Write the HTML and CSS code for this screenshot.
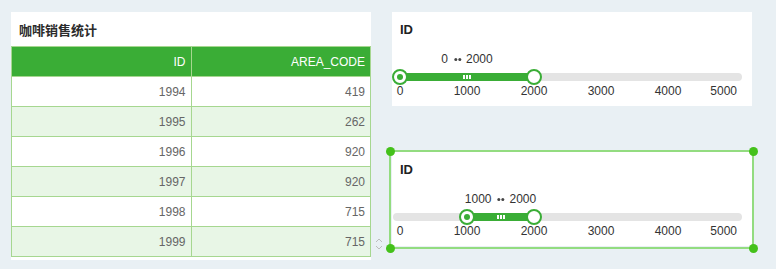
FILE: index.html
```html
<!DOCTYPE html>
<html lang="zh">
<head>
<meta charset="utf-8">
<title>咖啡销售统计</title>
<link rel="stylesheet" href="styles.css">
</head>
<body>
<div class="page">
  <section class="card table-card">
    <h2 class="card-title">咖啡销售统计</h2>
    <table class="grid">
      <thead>
        <tr><th>ID</th><th>AREA_CODE</th></tr>
      </thead>
      <tbody>
        <tr><td>1994</td><td>419</td></tr>
        <tr class="alt"><td>1995</td><td>262</td></tr>
        <tr><td>1996</td><td>920</td></tr>
        <tr class="alt"><td>1997</td><td>920</td></tr>
        <tr><td>1998</td><td>715</td></tr>
        <tr class="alt"><td>1999</td><td>715</td></tr>
      </tbody>
    </table>
    <svg class="scroll-arrows" width="8" height="14" viewBox="0 0 8 14">
      <path d="M1 5 L4 2 L7 5" fill="none" stroke="#bdbdbd" stroke-width="1"/>
      <path d="M1 9 L4 12 L7 9" fill="none" stroke="#bdbdbd" stroke-width="1"/>
    </svg>
  </section>

  <div class="side">
    <section class="card slider-card">
      <h3 class="slider-title">ID</h3>
      <div class="slider">
        <div class="label-row"><span class="range-label" style="left:20%">0<span class="dots"><i></i><i></i></span>2000</span></div>
        <div class="track">
          <div class="rail">
            <div class="fill" style="left:0%;width:40%"><span class="grip"><i></i><i></i><i></i></span></div>
            <span class="handle min" style="left:0%"></span>
            <span class="handle" style="left:40%"></span>
          </div>
        </div>
        <div class="ticks">
          <span style="left:0%">0</span>
          <span style="left:20%">1000</span>
          <span style="left:40%">2000</span>
          <span style="left:60%">3000</span>
          <span style="left:80%">4000</span>
          <span class="end" style="left:100%">5000</span>
        </div>
      </div>
    </section>

    <section class="card slider-card selected">
      <h3 class="slider-title">ID</h3>
      <div class="slider">
        <div class="label-row"><span class="range-label" style="left:30%">1000<span class="dots"><i></i><i></i></span>2000</span></div>
        <div class="track">
          <div class="rail">
            <div class="fill" style="left:20%;width:20%"><span class="grip"><i></i><i></i><i></i></span></div>
            <span class="handle min" style="left:20%"></span>
            <span class="handle" style="left:40%"></span>
          </div>
        </div>
        <div class="ticks">
          <span style="left:0%">0</span>
          <span style="left:20%">1000</span>
          <span style="left:40%">2000</span>
          <span style="left:60%">3000</span>
          <span style="left:80%">4000</span>
          <span class="end" style="left:100%">5000</span>
        </div>
      </div>
      <div class="selection">
        <span class="dot tl"></span><span class="dot tr"></span>
        <span class="dot bl"></span><span class="dot br"></span>
      </div>
    </section>
  </div>
</div>
</body>
</html>
```

FILE: styles.css
```css
* { box-sizing: border-box; }

html, body {
  margin: 0;
  padding: 0;
  background: #e9f0f4;
  font-family: "Liberation Sans", Arial, "Noto Sans CJK SC", sans-serif;
  color: #333;
}

.page {
  display: flex;
  align-items: flex-start;
  gap: 21px;
  padding: 12px 0 0 11px;
}

.card {
  background: #fff;
  width: 360px;
  position: relative;
}

/* ---------- table card ---------- */
.table-card {
  padding-bottom: 3px;
}

.card-title {
  margin: 0;
  height: 34px;
  padding-left: 8px;
  font-size: 13px;
  line-height: 35px;
  font-weight: bold;
  color: #2b2b2b;
  font-family: "Noto Sans CJK SC", "Liberation Sans", sans-serif;
}

.grid {
  width: 100%;
  border-collapse: collapse;
  font-size: 12px;
  table-layout: fixed;
}

.grid th,
.grid td {
  height: 30px;
  padding: 0 5px 0 0;
  text-align: right;
  border: 1px solid #a6d790;
}

.grid th {
  background: #3aad36;
  color: #fff;
  font-weight: normal;
  font-size: 12px;
}

.grid thead th + th {
  border-left-color: #bfe3b2;
}

.grid td {
  color: #666;
}

.grid tr.alt td {
  background: #e8f6e6;
}

.scroll-arrows {
  position: absolute;
  right: -12px;
  bottom: 9px;
}

/* ---------- slider cards ---------- */
.side {
  display: flex;
  flex-direction: column;
  gap: 46px;
}

.slider-card {
  height: 94px;
  padding-top: 10px;
}

.slider-title {
  margin: 0 0 0 8px;
  font-size: 13px;
  line-height: 16px;
  font-weight: bold;
  color: #222;
}

.slider {
  width: 349px;
  margin-left: 1px;
}

.label-row {
  position: relative;
  height: 14px;
  margin: 14px 7px 0;
}

.range-label {
  position: absolute;
  top: 0;
  transform: translateX(-50%);
  white-space: nowrap;
  display: flex;
  align-items: center;
  font-size: 12px;
  line-height: 14px;
  color: #333;
}

.dots {
  display: flex;
  gap: 1px;
  margin: 1px 5px 0 6px;
}

.dots i {
  display: block;
  width: 3px;
  height: 3px;
  border-radius: 50%;
  background: #444;
}

.track {
  position: relative;
  height: 16px;
  margin-top: 3px;
}

.track::before {
  content: "";
  position: absolute;
  left: 0;
  right: 0;
  top: 4px;
  height: 8px;
  border-radius: 4px;
  background: #e4e4e4;
}

.rail {
  position: absolute;
  top: 0;
  bottom: 0;
  left: 7px;
  right: 7px;
}

.fill {
  position: absolute;
  top: 4px;
  height: 8px;
  background: #3aad36;
}

.grip {
  position: absolute;
  left: 50%;
  top: 2px;
  transform: translateX(-50%);
  display: flex;
  gap: 1px;
}

.grip i {
  display: block;
  width: 2px;
  height: 4px;
  background: #fff;
}

.handle {
  position: absolute;
  top: 0;
  width: 16px;
  height: 16px;
  margin-left: -8px;
  border-radius: 50%;
  background: #fff;
  border: 2px solid #3aad36;
}

.handle.min::after {
  content: "";
  position: absolute;
  left: 50%;
  top: 50%;
  width: 6px;
  height: 6px;
  margin: -3px 0 0 -3px;
  border-radius: 50%;
  background: #3aad36;
}

.ticks {
  position: relative;
  height: 14px;
  margin: -1px 7px 0;
}

.ticks span {
  position: absolute;
  top: 0;
  transform: translateX(-50%);
  font-size: 12px;
  line-height: 14px;
  color: #333;
}

.ticks span.end {
  transform: translateX(calc(-100% + 2px));
}

/* ---------- selection frame ---------- */
.selection {
  position: absolute;
  top: -2px;
  left: -3px;
  right: -2px;
  bottom: -3px;
  border: 2px solid #93dc80;
  pointer-events: none;
}

.dot {
  position: absolute;
  width: 9px;
  height: 9px;
  border-radius: 50%;
  background: #44c11a;
}

.dot.tl { left: -5.5px; top: -5.5px; }
.dot.tr { right: -5.5px; top: -5.5px; }
.dot.bl { left: -5.5px; bottom: -5.5px; }
.dot.br { right: -5.5px; bottom: -5.5px; }
```
